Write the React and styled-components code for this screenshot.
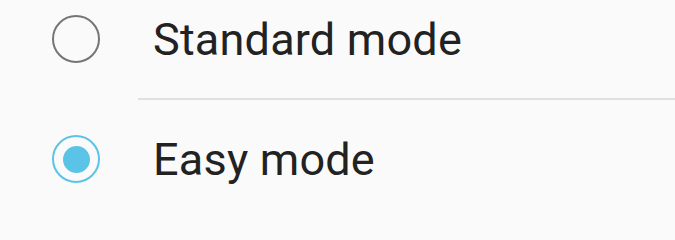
import React, { useState } from "react";
import styled, { createGlobalStyle } from "styled-components";

const Global = createGlobalStyle`
  html, body { margin: 0; padding: 0; background: #fafafa; }
  body { font-family: Roboto, "Noto Sans", sans-serif; }
`;

const Screen = styled.div`
  width: 675px;
  height: 200px;
  overflow: hidden;
  background: #fafafa;
`;

const List = styled.div`
  display: flex;
  flex-direction: column;
  margin-top: -20px;
`;

const Row = styled.label`
  display: flex;
  align-items: center;
  height: 118px;
  padding-left: 52px;
  gap: 53px;
  cursor: pointer;
`;

const Radio = styled.span`
  box-sizing: border-box;
  width: 48px;
  height: 48px;
  border-radius: 50%;
  border: ${(p) => (p.$checked ? "2.5px solid #5bc3e8" : "2.5px solid #757575")};
  display: flex;
  align-items: center;
  justify-content: center;
  flex-shrink: 0;
`;

const Dot = styled.span`
  width: 27px;
  height: 27px;
  border-radius: 50%;
  background: #5bc3e8;
`;

const Label = styled.span`
  font-family: Roboto, sans-serif;
  font-size: 45px;
  color: #222222;
  line-height: 1;
  letter-spacing: 0.2px;
`;

const Divider = styled.div`
  height: 2px;
  margin-left: 138px;
  background: #e0e0e0;
`;

const options = ["Standard mode", "Easy mode"];

export default function App() {
  const [selected, setSelected] = useState(1);
  return (
    <>
      <Global />
      <Screen>
        <List>
          {options.map((o, i) => (
            <React.Fragment key={o}>
              {i > 0 && <Divider />}
              <Row onClick={() => setSelected(i)}>
                <Radio $checked={selected === i}>{selected === i && <Dot />}</Radio>
                <Label>{o}</Label>
              </Row>
            </React.Fragment>
          ))}
        </List>
      </Screen>
    </>
  );
}
